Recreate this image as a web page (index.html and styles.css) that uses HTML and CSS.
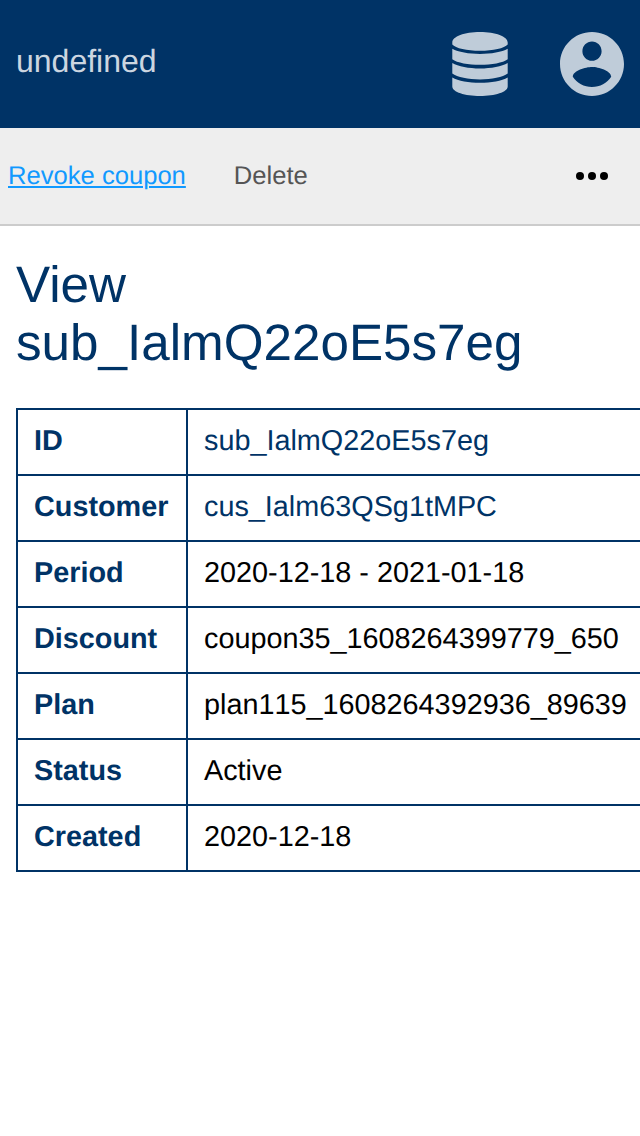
FILE: index.html
```html
<!DOCTYPE html>
<html lang="en">
<head>
<meta charset="utf-8">
<title>View subscription</title>
<link rel="stylesheet" href="styles.css">
</head>
<body>
<header class="header">
  <span class="brand">undefined</span>
  <div class="menus">
    <svg class="icon-db" viewBox="0 0 56 64"><path d="M0.300 10.500C0.300 4.500 12.500 0 28 0s27.700 4.500 27.700 10.500v2C52.500 16.300 41 18.800 28 18.800S3.500 16.300 0.300 12.500zM0.300 16.700C6 20 17 21.900 28 21.900s22-1.900 27.700-5.200v10.500C51 30.800 39.500 32.800 28 32.800S5 30.800 0.300 27.200zM0.300 31C6 34.400 17 36.500 28 36.500s22-2.100 27.700-5.500v10.600C51 45.300 39.500 47.500 28 47.500S5 45.300 0.300 41.600zM0.300 45.400C6 48.800 17 50.800 28 50.800s22-2 27.700-5.400v9.100C55.700 60 43 64 28 64S0.300 60 0.300 54.500z"/></svg>
    <svg class="icon-user" viewBox="2 2 20 20"><path d="M12 2C6.480 2 2 6.480 2 12s4.480 10 10 10 10-4.480 10-10S17.520 2 12 2zm0 3c1.660 0 3 1.340 3 3s-1.340 3-3 3-3-1.340-3-3 1.340-3 3-3zm0 14.200c-2.500 0-4.710-1.280-6-3.220.030-1.990 4-3.080 6-3.080 1.990 0 5.970 1.090 6 3.080-1.290 1.940-3.500 3.220-6 3.220z"/></svg>
  </div>
</header>
<nav class="nav">
  <a class="nav-link current" href="#">Revoke coupon</a>
  <a class="nav-link" href="#">Delete</a>
  <svg class="more" viewBox="0 0 32 8"><circle cx="4" cy="4" r="4"/><circle cx="16" cy="4" r="4"/><circle cx="28" cy="4" r="4"/></svg>
</nav>
<main class="content">
  <h1 class="title">View sub_IalmQ22oE5s7eg</h1>
  <table class="details">
    <tr><th>ID</th><td><a href="#">sub_IalmQ22oE5s7eg</a></td></tr>
    <tr><th>Customer</th><td><a href="#">cus_Ialm63QSg1tMPC</a></td></tr>
    <tr><th>Period</th><td>2020-12-18 - 2021-01-18</td></tr>
    <tr><th>Discount</th><td>coupon35_1608264399779_650</td></tr>
    <tr><th>Plan</th><td>plan115_1608264392936_89639</td></tr>
    <tr><th>Status</th><td>Active</td></tr>
    <tr><th>Created</th><td>2020-12-18</td></tr>
  </table>
</main>
</body>
</html>
```
FILE: styles.css
```css
* { box-sizing: border-box; }
body {
  margin: 0;
  min-height: 1136px;
  background: #fff;
  color: #000;
  font-family: "Liberation Sans", Arial, sans-serif;
  text-rendering: geometricPrecision;
  overflow: hidden;
}
.header {
  display: flex;
  align-items: center;
  justify-content: space-between;
  height: 128px;
  padding: 0 16px;
  background: #036;
}
.brand { color: #ccd6e0; font-size: 32px; line-height: 36px; padding-bottom: 6px; }
.menus { display: flex; gap: 52px; fill: #bfccd9; }
.icon-db { width: 56px; height: 64px; }
.icon-user { width: 64px; height: 64px; }
.nav {
  display: flex;
  align-items: center;
  gap: 48px;
  height: 98px;
  padding: 0 32px 0 8px;
  background: #eee;
  border-bottom: 2px solid #ccc;
}
.nav-link { color: #555; font-size: 25.6px; line-height: 30px; text-decoration: none; }
.nav-link.current {
  color: #1199ff;
  text-decoration: underline;
  text-decoration-thickness: 2px;
  text-underline-offset: 2px;
}
.more { width: 32px; height: 8px; margin-left: auto; }
.content { padding: 30px 0 0 16px; overflow: hidden; }
.title {
  width: 560px;
  margin: 0 0 36px;
  color: #036;
  font-size: 51.2px;
  font-weight: 400;
  line-height: 58px;
}
.details { width: 660px; border-collapse: collapse; font-size: 28.8px; line-height: 32px; }
.details th, .details td {
  height: 66px;
  padding: 15px 16px 17px;
  border: 2px solid #036;
  text-align: left;
  white-space: nowrap;
}
.details td { font-kerning: none; }
.details th { width: 170px; color: #036; }
.details a { color: #036; text-decoration: none; }
```
